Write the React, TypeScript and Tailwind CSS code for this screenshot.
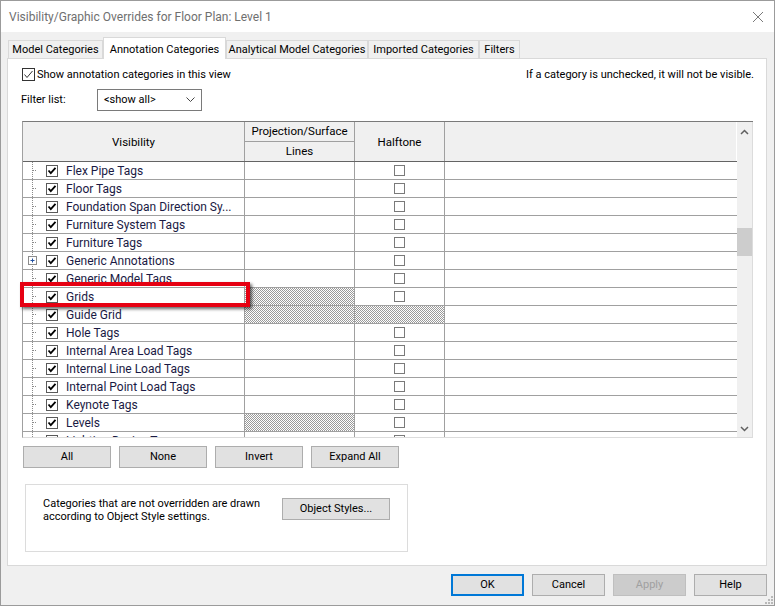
import React from 'react'

const font = { fontFamily: 'Roboto, "Liberation Sans", sans-serif' }

type Row = { name: string; proj?: boolean; half?: boolean; expand?: boolean }

const rows: Row[] = [
  { name: 'Flex Pipe Tags' },
  { name: 'Floor Tags' },
  { name: 'Foundation Span Direction Sy...' },
  { name: 'Furniture System Tags' },
  { name: 'Furniture Tags' },
  { name: 'Generic Annotations', expand: true },
  { name: 'Generic Model Tags' },
  { name: 'Grids', proj: true },
  { name: 'Guide Grid', proj: true, half: true },
  { name: 'Hole Tags' },
  { name: 'Internal Area Load Tags' },
  { name: 'Internal Line Load Tags' },
  { name: 'Internal Point Load Tags' },
  { name: 'Keynote Tags' },
  { name: 'Levels', proj: true },
  { name: 'Lighting Device Tags' },
]

const hatch =
  'bg-[repeating-conic-gradient(#9a9a9a_0%_25%,#ffffff_0%_50%)] bg-[length:2px_2px]'

function TreeLines({ expand }: { expand?: boolean }) {
  return (
    <svg width="14" height="17" className="shrink-0">
      <line x1="9.5" y1="0" x2="9.5" y2="17" stroke="#8a8a8a" strokeDasharray="1 1" />
      <line x1="10" y1="8.5" x2="22" y2="8.5" stroke="#8a8a8a" strokeDasharray="1 1" />
      {expand && (
        <g>
          <rect x="5.5" y="4.5" width="8" height="8" fill="#fff" stroke="#8c8c8c" />
          <line x1="7.5" y1="8.5" x2="11.5" y2="8.5" stroke="#2050a0" />
          <line x1="9.5" y1="6.5" x2="9.5" y2="10.5" stroke="#2050a0" />
        </g>
      )}
    </svg>
  )
}

function RowCheck() {
  return (
    <svg width="12" height="12" className="shrink-0">
      <rect x="0.5" y="0.5" width="11" height="11" fill="#fff" stroke="#5a5a5a" />
      <path d="M2.5 5.5 L4.8 8.2 L9.5 2.8" fill="none" stroke="#000" strokeWidth="1.8" />
    </svg>
  )
}

function Button({ label, className = '' }: { label: string; className?: string }) {
  return (
    <div
      className={`flex h-[22px] items-center justify-center whitespace-nowrap border border-[#adadad] bg-[#e1e1e1] pt-px text-black ${className}`}
    >
      {label}
    </div>
  )
}

function Tab({ label, w, active }: { label: string; w: string; active?: boolean }) {
  if (active) {
    return (
      <div
        className={`${w} relative z-10 -mb-px flex h-[22px] items-start justify-center whitespace-nowrap border border-b-0 border-[#d9d9d9] bg-white pt-[4px] text-black`}
      >
        {label}
      </div>
    )
  }
  return (
    <div
      className={`${w} flex h-[18px] items-center justify-center whitespace-nowrap border border-b-0 border-[#d9d9d9] bg-[#f0f0f0] pt-[2px] text-black`}
    >
      {label}
    </div>
  )
}

export default function App() {
  return (
    <div
      style={font}
      className="flex h-[606px] w-[775px] flex-col overflow-hidden border border-[#9b9b9b] bg-[#f0f0f0] text-[11px]"
    >
      {/* title bar */}
      <div className="flex h-[31px] shrink-0 items-center justify-between bg-white pl-[8px] pr-[10px]">
        <span className="text-[12px] text-[#6f6f6f]">Visibility/Graphic Overrides for Floor Plan: Level 1</span>
        <svg width="12" height="12">
          <path d="M1 1 L11 11 M11 1 L1 11" stroke="#7a7a7a" strokeWidth="1" />
        </svg>
      </div>

      {/* tabs */}
      <div className="ml-[7px] mt-[6px] flex h-[20px] items-end">
        <Tab label="Model Categories" w="w-[95px]" />
        <Tab label="Annotation Categories" w="w-[123px]" active />
        <Tab label="Analytical Model Categories" w="w-[142px]" />
        <Tab label="Imported Categories" w="w-[111px]" />
        <Tab label="Filters" w="w-[41px]" />
      </div>

      {/* panel */}
      <div className="ml-[6px] flex h-[510px] w-[760px] flex-col border border-[#d9d9d9] bg-white pl-[14px] pr-[12px]">
        <div className="mt-[9px] flex h-[13px] items-center justify-between">
          <div className="flex items-center gap-[2px]">
            <svg width="13" height="13">
              <rect x="0.5" y="0.5" width="12" height="12" fill="#fff" stroke="#333" />
              <path d="M2.5 6.5 L5 9.5 L10.5 3" fill="none" stroke="#333" strokeWidth="1" />
            </svg>
            <span className="pt-[2px] text-black">Show annotation categories in this view</span>
          </div>
          <span className="pt-[1px] text-black">If a category is unchecked, it will not be visible.</span>
        </div>

        <div className="-ml-px mt-[8px] flex h-[22px] items-center">
          <span className="w-[76px] pt-[1px] text-black">Filter list:</span>
          <div className="flex h-[22px] w-[105px] items-center justify-between border border-[#7a7a7a] bg-white pl-[6px] pr-[6px]">
            <span className="pt-[1px] text-black">&lt;show all&gt;</span>
            <svg width="9" height="6">
              <path d="M0.5 0.5 L4.5 4.5 L8.5 0.5" fill="none" stroke="#444" />
            </svg>
          </div>
        </div>

        {/* table */}
        <div className="relative mt-[10px] flex h-[317px] w-[731px] border-b border-l border-t border-b-[#dcdcdc] border-l-[#a0a0a0] border-t-[#7a7a7a]">
          <div className="flex flex-1 flex-col overflow-hidden">
            {/* header */}
            <div className="flex h-[40px] shrink-0 border-b border-[#646464] bg-[#f0f0f0] text-[11.5px] text-black">
              <div className="flex w-[222px] items-center justify-center border-r border-[#a0a0a0] pt-[2px]">Visibility</div>
              <div className="flex w-[110px] flex-col border-r border-[#a0a0a0]">
                <div className="flex h-[20px] items-center justify-center border-b border-[#a0a0a0] pt-[1px]">Projection/Surface</div>
                <div className="flex flex-1 items-center justify-center pt-[1px]">Lines</div>
              </div>
              <div className="flex w-[90px] items-center justify-center border-r border-[#a0a0a0] pt-[2px]">Halftone</div>
              <div className="flex-1 border-r border-white" />
            </div>
            {/* rows */}
            {rows.map((r) => (
              <div key={r.name} className="flex h-[18px] shrink-0 border-b border-[#a0a0a0]">
                <div className="flex w-[222px] items-center border-r border-[#a0a0a0]">
                  <TreeLines expand={r.expand} />
                  <div className="ml-[9px]">
                    <RowCheck />
                  </div>
                  <span className="ml-[8px] whitespace-nowrap pt-[1px] text-[12px] text-[#1a1a44]">{r.name}</span>
                </div>
                <div className={`w-[110px] border-r border-[#a0a0a0] ${r.proj ? hatch : ''}`} />
                <div className={`flex w-[90px] items-center justify-center border-r border-[#a0a0a0] ${r.half ? hatch : ''}`}>
                  {!r.half && <div className="h-[11px] w-[11px] border border-[#7a7a7a] bg-white" />}
                </div>
                <div className="flex-1" />
              </div>
            ))}
          </div>

          {/* scrollbar */}
          <div className="flex w-[16px] shrink-0 flex-col items-center border-r border-[#dcdcdc] bg-[#f0f0f0]">
            <svg width="9" height="6" className="mt-[7px]">
              <path d="M1 5 L4.5 1.5 L8 5" fill="none" stroke="#606060" strokeWidth="1.5" />
            </svg>
            <div className="mt-[93px] h-[28px] w-[15px] bg-[#cdcdcd]" />
            <div className="flex-1" />
            <svg width="9" height="6" className="mb-[5px]">
              <path d="M1 1 L4.5 4.5 L8 1" fill="none" stroke="#606060" strokeWidth="1.5" />
            </svg>
          </div>

          {/* highlight box around Grids */}
          <div className="pointer-events-none absolute left-[-3px] top-[160px] h-[25px] w-[230px] border-[4px] border-[#e60012] shadow-[2px_2px_3px_rgba(0,0,0,0.6)]" />
        </div>

        <div className="ml-px mt-[8px] flex gap-[8px]">
          <Button label="All" className="w-[88px]" />
          <Button label="None" className="w-[88px]" />
          <Button label="Invert" className="w-[88px]" />
          <Button label="Expand All" className="w-[88px]" />
        </div>

        <div className="ml-[3px] mt-[16px] flex h-[68px] w-[383px] items-start border border-[#dcdcdc] pl-[17px] pt-[12px]">
          <div className="w-[239px] leading-[13px] text-black">
            Categories that are not overridden are drawn according to Object Style settings.
          </div>
          <Button label="Object Styles..." className="mt-[1px] w-[108px]" />
        </div>
      </div>

      {/* bottom buttons */}
      <div className="mt-[8px] flex justify-end gap-[8px] pr-[7px]">
        <div className="flex h-[22px] w-[73px] items-center justify-center border-2 border-[#0078d7] bg-[#e1e1e1] pt-px text-black">OK</div>
        <Button label="Cancel" className="w-[73px]" />
        <div className="flex h-[22px] w-[73px] items-center justify-center border border-[#bfbfbf] bg-[#cccccc] pt-px text-[#a0a0a0]">Apply</div>
        <Button label="Help" className="w-[73px]" />
      </div>
      <div className="flex flex-1 items-end justify-end pb-[1px] pr-[1px]">
        <svg width="8" height="8">
          <rect x="6" y="0" width="2" height="2" fill="#b8b8b8" />
          <rect x="3" y="3" width="2" height="2" fill="#b8b8b8" />
          <rect x="6" y="3" width="2" height="2" fill="#b8b8b8" />
          <rect x="0" y="6" width="2" height="2" fill="#b8b8b8" />
          <rect x="3" y="6" width="2" height="2" fill="#b8b8b8" />
          <rect x="6" y="6" width="2" height="2" fill="#b8b8b8" />
        </svg>
      </div>
    </div>
  )
}
